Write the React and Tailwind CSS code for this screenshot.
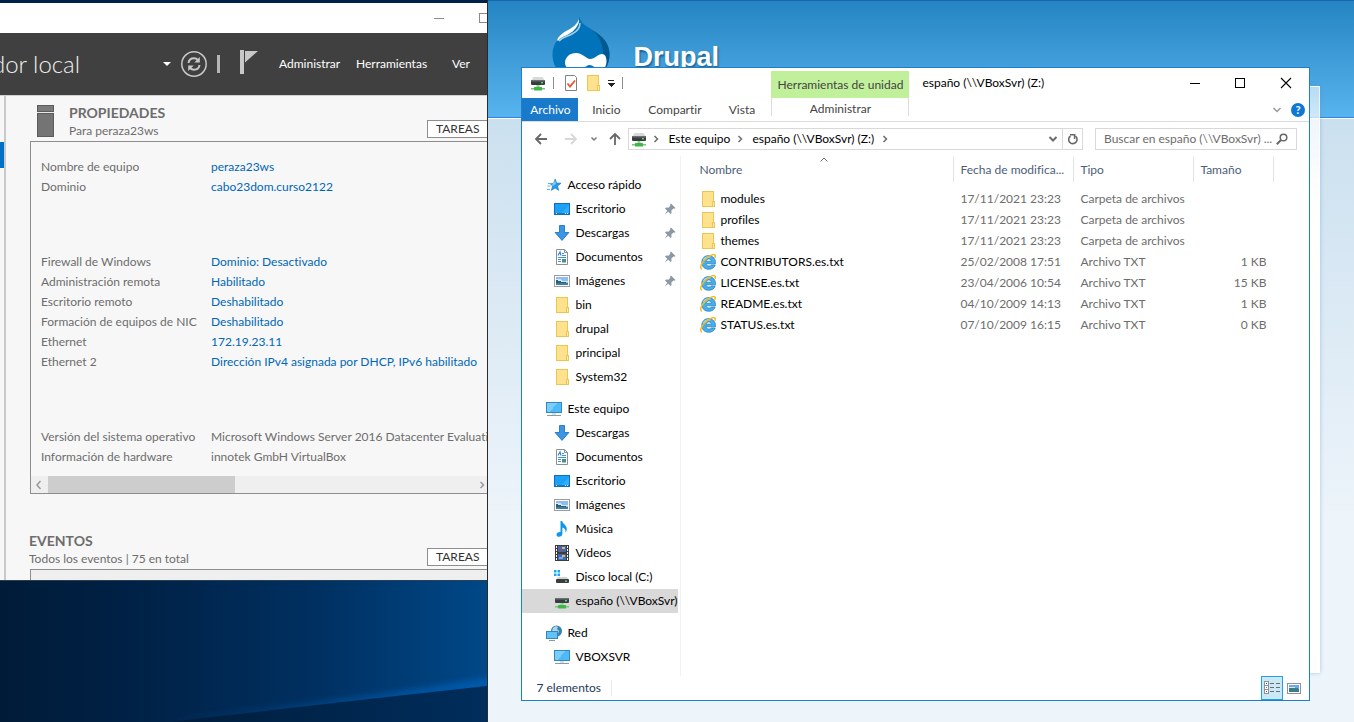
import React from "react";

/* ---------- icons ---------- */

function Svg({ children, size = 16, className = "", crisp = false }) {
  return (
    <svg
      width={size}
      height={size}
      viewBox={`0 0 ${size} ${size}`}
      fill="none"
      aria-hidden="true"
      className={`shrink-0 ${className}`}
      shapeRendering={crisp ? "crispEdges" : "auto"}
    >
      {children}
    </svg>
  );
}

const NetDrive = () => (
  <Svg>
    <path d="M3.500 2h9L15 6H1z" fill="#d6d8d9" />
    <rect x="1" y="5" width="14" height="5" rx="1" fill="#3a3d3f" />
    <rect x="1" y="5" width="14" height="1.400" rx=".7" fill="#6c7072" />
    <rect x="11" y="7" width="2" height="1.400" fill="#4fe06a" />
    <path d="M6.500 10h3v2h-3z" fill="#8fd98b" />
    <rect x="1" y="13" width="14" height="1.500" fill="#7cc47c" />
    <rect x="4" y="12" width="8" height="3.500" rx=".6" fill="#3fb54a" />
  </Svg>
);

const Folder = () => (
  <Svg crisp>
    <rect x="2" y="0" width="12" height="16" fill="#ecc655" />
    <rect x="3" y="1" width="10" height="14" fill="#ffe28e" />
    <rect x="12" y="10" width="3" height="6" fill="#ecc655" />
    <rect x="13" y="11" width="1" height="4" fill="#ffe9a8" />
  </Svg>
);

const Star = () => (
  <Svg>
    <path d="M9.200 2l1.500 4 4.400.2-3.500 2.800 1.200 4.400-3.700-2.300-3.800 2.300 1.300-4.400-2.400-2.300 3.500-.3z" fill="#2b9ae6" stroke="#1776bd" strokeWidth=".6" />
    <path d="M9.200 3.800l.9 2.700-3.300 2.700-.7-1.700z" fill="#7cc8f7" />
    <path d="M2 6.500h3M1.500 9h3M1 12.500h3" stroke="#5cb1ea" />
  </Svg>
);

const Desktop = () => (
  <Svg crisp>
    <rect x="0" y="2" width="16" height="12" fill="#0d6fc1" />
    <rect x="1" y="3" width="14" height="9" fill="#1ba1f5" />
    <path d="M8 12L15 4v8z" fill="#33adf8" />
    <rect x="1" y="12" width="14" height="1" fill="#1478c8" />
    <rect x="2" y="12" width="1" height="1" fill="#fff" />
    <rect x="11" y="12" width="1" height="1" fill="#fff" />
    <rect x="13" y="12" width="1" height="1" fill="#fff" />
  </Svg>
);

const Download = () => (
  <Svg>
    <path d="M5.500 .5h5v7h4.400L8 15.400 1.100 7.500h4.400z" fill="#3b96e4" stroke="#2377c2" strokeWidth=".9" />
  </Svg>
);

const Doc = () => (
  <Svg>
    <path d="M2.500 .5h8l3 3v12h-11z" fill="#fff" stroke="#8b8f92" />
    <path d="M10.500 .5v3h3" stroke="#8b8f92" />
    <path d="M4 6.500l2-3.500 1 3.500" stroke="#2a7fc9" strokeWidth="1.100" />
    <path d="M8 4.500h2M8 6.500h4M4 8.500h8M4 10.500h3M4 12.500h3" stroke="#3f93d3" />
    <rect x="8" y="10" width="4" height="3.500" fill="#4c8d86" />
  </Svg>
);

const Picture = () => (
  <Svg crisp>
    <rect x="0" y="2" width="16" height="12" fill="#9a9da0" />
    <rect x="1" y="3" width="14" height="10" fill="#fff" />
    <rect x="2" y="4" width="12" height="8" fill="#8fbdec" />
    <path d="M2 6h4l2 2h6v1H2z" fill="#d3e6f4" />
    <path d="M2 7l3 1 4 1 5 1v2H2z" fill="#2f5e73" />
    <rect x="2" y="10" width="12" height="2" fill="#3c7fa8" />
  </Svg>
);

const Monitor = () => (
  <Svg crisp>
    <rect x="0" y="1" width="16" height="11" fill="#3187bf" />
    <rect x="1" y="2" width="14" height="9" fill="#4fbaf8" />
    <path d="M1 2h10L4 11H1z" fill="#7bcdfb" />
    <rect x="6" y="12" width="4" height="2" fill="#d7dde1" />
    <rect x="1" y="14" width="14" height="1" fill="#8a9ba8" />
  </Svg>
);

const Music = () => (
  <Svg>
    <path d="M6.500 0h1.700c.3 2.700 4.600 4 4.600 8 0 1.500-.6 2.600-1.400 3.500.6-2.600-.7-4.300-3-5v6.300c0 1.800-1.600 3-3.400 3-1.500 0-2.500-.9-2.500-2.100 0-1.600 1.700-2.800 4-2.600z" fill="#0f97ea" />
  </Svg>
);

const Film = () => (
  <Svg crisp>
    <rect x="1" y="0" width="14" height="16" fill="#3b3d3f" />
    {[1, 4, 7, 10, 13].map((y) => (
      <g key={y} fill="#fff">
        <rect x="2" y={y} width="1" height="2" />
        <rect x="13" y={y} width="1" height="2" />
      </g>
    ))}
    <rect x="4" y="1" width="8" height="6" fill="#3c69bb" />
    <rect x="4" y="9" width="8" height="6" fill="#3c69bb" />
    <rect x="8" y="2" width="3" height="2" fill="#e8b93a" />
    <rect x="5" y="4" width="3" height="2" fill="#b54536" />
    <rect x="8" y="10" width="3" height="2" fill="#e8b93a" />
    <rect x="5" y="12" width="4" height="2" fill="#7aa8dd" />
  </Svg>
);

const LocalDisk = () => (
  <Svg>
    <path d="M0 1h2.500v2.500H0zM3.500 1H6v2.500H3.500zM0 4.500h2.500V7H0zM3.500 4.500H6V7H3.500z" fill="#19a7ef" />
    <path d="M4 8h9l2 3H2z" fill="#d2d5d7" />
    <rect x="2" y="10" width="13" height="4" rx="1" fill="#3a3d3f" />
    <rect x="11" y="11.500" width="2" height="1.300" fill="#62e36f" />
  </Svg>
);

const Network = () => (
  <Svg>
    <circle cx="10.500" cy="6" r="5.500" fill="#3b80aa" />
    <path d="M7 3c2-2 4-2 5-1l-1 2 2 2-1 3-3-2-3-1z" fill="#a9d6ea" />
    <rect x="0" y="6" width="12" height="8" fill="#2f86c1" />
    <rect x="1" y="7" width="10" height="6" fill="#62c2f8" />
    <path d="M3 15.500h6" stroke="#8a9ba8" />
  </Svg>
);

const Pin = () => (
  <Svg size={12} className="ml-auto mr-[2px]">
    <path d="M7 .5l4.500 4.500-1 .8-1.200-.2-2 2.100.3 2.300-1 1L4.300 8.700 .6 11.500l2.700-3.800L1 5.400l1-1 2.300.3 2-2-.2-1.300z" fill="#8c99a4" />
  </Svg>
);

const Explorer = () => (
  <Svg>
    <path
      fillRule="evenodd"
      d="M8.600 1.600c4 0 6.900 2.900 6.900 6.900v1.300H6.100c.2 1.500 1.300 2.300 2.900 2.300 1.100 0 1.900-.4 2.400-1.100h3.800c-.9 2.700-3.300 4.300-6.400 4.300-4.200 0-7-2.700-7-6.800s2.800-6.900 6.800-6.900zM6.100 7.200h5.300c-.2-1.400-1.200-2.300-2.600-2.300S6.400 5.800 6.100 7.200z"
      fill="#46aee8"
      stroke="#2179bd"
      strokeWidth=".7"
    />
    <path d="M3.400 6.200C4.700 3.500 7.500 2.400 10.500 3" stroke="#a5dcf8" strokeWidth="1.200" />
    <path d="M2 15.200C-1 14 1.800 8.200 6.500 4.200 10.500 .8 14.600-.3 15.200 1.500c.2.700 0 1.500-.4 2.400" stroke="#f2bb1d" strokeWidth="1.500" />
  </Svg>
);

function Chevron({ dir, className = "", stroke = "#6d6d6d", width = 1.5 }) {
  const d = {
    down: "M1.500 3l3.500 3.500L8.500 3",
    up: "M1.500 6.500L5 3l3.500 3.500",
    right: "M3.500 2L6.500 5l-3 3",
    left: "M6.500 1L3 5l3.500 4",
  }[dir];
  return (
    <Svg size={10} className={className}>
      <path d={d} stroke={stroke} strokeWidth={width} />
    </Svg>
  );
}

/* ---------- server manager ---------- */

const propertyGroups = [
  [
    ["Nombre de equipo", "peraza23ws", true],
    ["Dominio", "cabo23dom.curso2122", true],
  ],
  [
    ["Firewall de Windows", "Dominio: Desactivado", true],
    ["Administración remota", "Habilitado", true],
    ["Escritorio remoto", "Deshabilitado", true],
    ["Formación de equipos de NIC", "Deshabilitado", true],
    ["Ethernet", "172.19.23.11", true],
    ["Ethernet 2", "Dirección IPv4 asignada por DHCP, IPv6 habilitado", true],
  ],
  [
    ["Versión del sistema operativo", "Microsoft Windows Server 2016 Datacenter Evaluation", false],
    ["Información de hardware", "innotek GmbH VirtualBox", false],
  ],
];

function TasksButton() {
  return (
    <button className="h-[18px] w-[120px] border border-[#8e8e8e] bg-white pl-2 text-left text-xs leading-4 text-[#333]">
      TAREAS
    </button>
  );
}

function ServerManager() {
  return (
    <section className="flex h-[577px] flex-col overflow-hidden whitespace-nowrap bg-[#f7f7f7]">
      <div className="flex h-[30px] shrink-0 items-center bg-white pl-[434px]">
        <button aria-label="Minimizar" className="flex h-[9px] w-[10px] shrink-0 items-center">
          <span className="block h-px w-full bg-[#8c8c8c]" />
        </button>
        <button aria-label="Maximizar" className="ml-[35px] size-[10px] shrink-0 border border-[#8c8c8c]" />
      </div>

      <header className="flex h-[62px] shrink-0 items-center bg-[#404040] text-xs text-white">
        <h1 className="-ml-2 w-[171px] shrink-0 text-2xl font-light text-[#f0f0f0]">dor local</h1>
        <svg width="8" height="4" viewBox="0 0 8 4" className="shrink-0" aria-hidden="true">
          <path d="M0 0h8L4 4z" fill="#fff" />
        </svg>
        <button aria-label="Actualizar" className="ml-[10px] shrink-0">
          <svg width="26" height="26" viewBox="0 0 26 26" fill="none">
            <circle cx="13" cy="13" r="12.200" stroke="#c8c8c8" strokeWidth="1.500" />
            <path d="M7.500 12c.3-3 2.600-4.700 5.500-4.700 1.800 0 3 .7 4 1.700M18.500 14c-.3 3-2.600 4.700-5.500 4.700-1.800 0-3-.7-4-1.700" stroke="#c8c8c8" strokeWidth="2" />
            <path d="M18.800 6v5.500h-5.500zM7.200 20v-5.500h5.500z" fill="#c8c8c8" />
          </svg>
        </button>
        <span className="ml-[10px] h-[18px] w-[3px] shrink-0 bg-[#b5b5b5]" />
        <button aria-label="Notificaciones" className="ml-5 shrink-0">
          <svg width="20" height="28" viewBox="0 0 20 28" className="block">
            <path d="M0 0h4v24H0z" fill="#c8c8c8" />
            <path d="M5 1h13L5 12.500z" fill="#c8c8c8" />
          </svg>
        </button>
        <button className="ml-[19px] w-[77px] shrink-0 text-left">Administrar</button>
        <button className="w-24 shrink-0 text-left">Herramientas</button>
        <button className="shrink-0">Ver</button>
      </header>

      <div className="flex min-h-0 flex-1 border-t border-[#d0d0d0]">
        <div className="w-[6px] shrink-0 border-r-2 border-[#c9c9c9] pt-[46px]">
          <div className="h-[26px] bg-[#0072c6]" />
        </div>
        <div className="min-w-0 flex-1 pl-6 text-xs text-[#6d6d6d]">
          <div className="flex h-[45px] items-start">
            <svg width="17" height="32" viewBox="0 0 17 32" className="ml-[7px] mt-[9px] shrink-0" aria-hidden="true">
              <rect width="17" height="32" fill="#5c5c5c" />
              <rect x="1" y="1" width="15" height="5" fill="#7b7b7b" />
              <rect y="7" width="17" height="1" fill="#e8e8e8" />
              <rect x="1" y="9" width="15" height="22" fill="#747474" />
            </svg>
            <div className="ml-[15px] mt-2 w-[358px] shrink-0">
              <h2 className="text-sm font-bold leading-[18px]">PROPIEDADES</h2>
              <p className="leading-[18px]">Para peraza23ws</p>
            </div>
            <div className="mt-6 shrink-0">
              <TasksButton />
            </div>
          </div>

          <div className="border-y border-l border-[#8e8e8e]">
            <div className="flex flex-col gap-[55px] overflow-hidden pb-[9px] pl-[10px] pt-[15px]">
              {propertyGroups.map((rows, i) => (
                <dl key={i} className="grid grid-cols-[170px_auto] justify-start leading-5">
                  {rows.map(([name, value, link]) => (
                    <React.Fragment key={name}>
                      <dt>{name}</dt>
                      <dd>
                        {link ? (
                          <a href="#propiedad" className="text-[#0067b8]">
                            {value}
                          </a>
                        ) : (
                          value
                        )}
                      </dd>
                    </React.Fragment>
                  ))}
                </dl>
              ))}
            </div>
            <div className="flex h-[17px] items-center bg-[#efefef]">
              <Chevron dir="left" className="mx-[3px]" stroke="#9a9a9a" />
              <div className="ml-px h-full w-[187px] bg-[#cdcdcd]" />
              <Chevron dir="right" className="ml-auto" stroke="#9a9a9a" />
            </div>
          </div>

          <div className="mt-[38px] flex h-[37px] items-start">
            <div className="-ml-px w-[398px] shrink-0">
              <h2 className="text-sm font-bold leading-[18px]">EVENTOS</h2>
              <p className="leading-[18px]">Todos los eventos | 75 en total</p>
            </div>
            <div className="mt-4 shrink-0">
              <TasksButton />
            </div>
          </div>
          <div className="h-20 border-l border-t border-[#8e8e8e] bg-[#efefef]" />
        </div>
      </div>
    </section>
  );
}

function Wallpaper() {
  return (
    <svg
      viewBox="0 0 487 142"
      preserveAspectRatio="none"
      className="absolute inset-0 size-full"
      aria-hidden="true"
    >
      <defs>
        <linearGradient id="sky" x1="0" y1="0" x2="1" y2="0">
          <stop offset="0" stopColor="#001b38" />
          <stop offset=".3" stopColor="#002247" />
          <stop offset=".65" stopColor="#003061" />
          <stop offset="1" stopColor="#004888" />
        </linearGradient>
        <linearGradient id="beam" x1="0" y1="0" x2="1" y2="0">
          <stop offset="0" stopColor="#0059ad" stopOpacity="0" />
          <stop offset="1" stopColor="#005cb0" />
        </linearGradient>
        <linearGradient id="ground" x1="0" y1="0" x2="1" y2="0">
          <stop offset="0" stopColor="#001d3c" />
          <stop offset="1" stopColor="#002d5c" />
        </linearGradient>
        <filter id="soft" x="-10%" y="-50%" width="120%" height="200%">
          <feGaussianBlur stdDeviation="3" />
        </filter>
      </defs>
      <rect width="487" height="142" fill="url(#sky)" />
      <path d="M170 138Q340 122 500 96V108Q360 124 170 144z" fill="url(#beam)" filter="url(#soft)" />
      <path d="M170 142Q340 122 487 106V142z" fill="url(#ground)" />
      <rect width="487" height="1" fill="#2a3f52" />
    </svg>
  );
}

/* ---------- file explorer ---------- */

const navGroups = [
  {
    head: ["Acceso rápido", Star],
    items: [
      ["Escritorio", Desktop, true],
      ["Descargas", Download, true],
      ["Documentos", Doc, true],
      ["Imágenes", Picture, true],
      ["bin", Folder],
      ["drupal", Folder],
      ["principal", Folder],
      ["System32", Folder],
    ],
  },
  {
    head: ["Este equipo", Monitor],
    items: [
      ["Descargas", Download],
      ["Documentos", Doc],
      ["Escritorio", Desktop],
      ["Imágenes", Picture],
      ["Música", Music],
      ["Vídeos", Film],
      ["Disco local (C:)", LocalDisk],
      ["españo (\\\\VBoxSvr)", NetDrive, false, true],
    ],
  },
  { head: ["Red", Network], items: [["VBOXSVR", Monitor]] },
];

const files = [
  ["modules", "17/11/2021 23:23", "Carpeta de archivos", ""],
  ["profiles", "17/11/2021 23:23", "Carpeta de archivos", ""],
  ["themes", "17/11/2021 23:23", "Carpeta de archivos", ""],
  ["CONTRIBUTORS.es.txt", "25/02/2008 17:51", "Archivo TXT", "1 KB"],
  ["LICENSE.es.txt", "23/04/2006 10:54", "Archivo TXT", "15 KB"],
  ["README.es.txt", "04/10/2009 14:13", "Archivo TXT", "1 KB"],
  ["STATUS.es.txt", "07/10/2009 16:15", "Archivo TXT", "0 KB"],
];

function NavPane() {
  return (
    <nav className="flex w-[159px] shrink-0 flex-col gap-2 border-r border-[#f0f0f0] pt-[17px]">
      {navGroups.map(({ head: [title, HeadIcon], items }) => (
        <ul key={title} className="mr-[2px]">
          <li>
            <button className="flex h-6 w-full items-center gap-[5px] pl-6">
              <HeadIcon />
              {title}
            </button>
          </li>
          {items.map(([name, Icon, pinned, selected]) => (
            <li key={name}>
              <button
                className={`flex h-6 w-full items-center gap-[5px] pl-8 ${selected ? "bg-[#d9d9d9]" : ""}`}
              >
                <Icon />
                {name}
                {pinned && <Pin />}
              </button>
            </li>
          ))}
        </ul>
      ))}
    </nav>
  );
}

function FileTable() {
  const th = "h-8 p-0 pt-px text-left align-top font-normal";
  const cell = "flex h-[25px] items-center border-r border-[#e2e2e2]";
  return (
    <div className="min-w-0 flex-1 overflow-hidden">
      <table className="w-full table-fixed border-collapse">
        <colgroup>
          <col className="w-[273px]" />
          <col className="w-[120px]" />
          <col className="w-[120px]" />
          <col className="w-[80px]" />
          <col />
        </colgroup>
        <thead className="text-[#4c607a]">
          <tr>
            <th className={th}>
              <div className={`relative pl-[18px] ${cell}`}>
                Nombre
                <Chevron dir="up" width={1} className="absolute left-[138px] top-[-2px]" />
              </div>
            </th>
            <th className={th}>
              <div className={`pl-[6px] ${cell}`}>Fecha de modifica...</div>
            </th>
            <th className={th}>
              <div className={`pl-[6px] ${cell}`}>Tipo</div>
            </th>
            <th className={th}>
              <div className={`pl-[6px] ${cell}`}>Tamaño</div>
            </th>
            <td />
          </tr>
        </thead>
        <tbody className="text-[#6d6d6d]">
          {files.map(([name, date, type, size]) => (
            <tr key={name} className="h-[21px]">
              <td className="p-0">
                <div className="flex items-center gap-1 pl-[19px] text-black">
                  {size ? <Explorer /> : <Folder />}
                  {name}
                </div>
              </td>
              <td className="p-0 pl-[6px]">{date}</td>
              <td className="p-0 pl-[6px]">{type}</td>
              <td className="p-0 pr-2 text-right">{size}</td>
              <td />
            </tr>
          ))}
        </tbody>
      </table>
    </div>
  );
}

function ExplorerWindow() {
  return (
    <section className="absolute bottom-[21px] left-[33px] right-[44px] top-[67px] flex flex-col whitespace-nowrap border border-[#1b80d0] bg-white text-xs text-black">
      <header className="flex h-[54px] shrink-0 border-b border-[#dadbdc] text-[#444]">
        <div className="w-[249px] shrink-0">
          <div className="flex h-[30px] items-center pl-2">
            <NetDrive />
            <span className="ml-[7px] h-3 w-px bg-[#8c8c8c]" />
            <button aria-label="Propiedades" className="ml-[9px]">
              <Svg>
                <path d="M2.500 .5h9l2 2v13h-11z" fill="#fff" stroke="#7f8385" />
                <path d="M4.500 8.500l2.500 3 5-6" stroke="#e8562a" strokeWidth="1.800" />
              </Svg>
            </button>
            <button aria-label="Nueva carpeta" className="ml-[6px]">
              <Folder />
            </button>
            <button aria-label="Personalizar barra" className="ml-[6px]">
              <svg width="8" height="8" viewBox="0 0 8 8" aria-hidden="true" shapeRendering="crispEdges">
                <path d="M1 1h6v1H1zM0 4h8L4 8z" fill="#222" />
              </svg>
            </button>
            <span className="ml-[7px] h-3 w-px bg-[#8c8c8c]" />
          </div>
          <div className="flex h-[23px]">
            <button className="w-14 bg-[#1979ca] text-white">Archivo</button>
            <button className="w-14">Inicio</button>
            <button className="w-[81px]">Compartir</button>
            <button className="w-[53px]">Vista</button>
          </div>
        </div>
        <div className="w-[138px] shrink-0 pt-[3px] text-center">
          <div className="h-[27px] bg-[#c0f09a] leading-7">Herramientas de unidad</div>
          <button className="h-[18px] w-full border-x border-[#dcdcdc] pt-[3px]">Administrar</button>
        </div>
        <div className="flex flex-1 flex-col">
          <div className="flex h-[30px] items-center pl-[13px] text-black">
            <h2>españo (\\VBoxSvr) (Z:)</h2>
            <div className="ml-auto flex w-[120px]">
              <button aria-label="Minimizar">
                <Svg size={12} crisp>
                  <path d="M1 6h10v1H1z" fill="#000" />
                </Svg>
              </button>
              <button aria-label="Maximizar" className="ml-[33px]">
                <Svg size={12} crisp>
                  <path d="M1.500 1.500h9v9h-9z" stroke="#000" />
                </Svg>
              </button>
              <button aria-label="Cerrar" className="ml-[34px]">
                <Svg size={12}>
                  <path d="M1 1l10 10M11 1L1 11" stroke="#000" strokeWidth="1.100" />
                </Svg>
              </button>
            </div>
          </div>
          <div className="flex h-[23px] items-center justify-end gap-[9px] pr-1">
            <button aria-label="Expandir cinta">
              <Chevron dir="down" stroke="#9a9a9a" />
            </button>
            <button aria-label="Ayuda" className="size-[14px] rounded-full bg-[#0f78d4] text-[11px] font-bold leading-[14px] text-white">
              ?
            </button>
          </div>
        </div>
      </header>

      <div className="flex h-[34px] shrink-0 items-center pl-3 pr-3">
        <button aria-label="Atrás">
          <Svg size={14}>
            <path d="M13 7H2M7 2L2 7l5 5" stroke="#686868" strokeWidth="1.800" />
          </Svg>
        </button>
        <button aria-label="Adelante" className="ml-4">
          <Svg size={14}>
            <path d="M1 7h11M7 2l5 5-5 5" stroke="#d8d8d8" strokeWidth="1.800" />
          </Svg>
        </button>
        <button aria-label="Ubicaciones recientes" className="ml-[11px]">
          <Svg size={10}>
            <path d="M2.500 3.500L5 6l2.500-2.500" stroke="#7a7a7a" strokeWidth="1.500" />
          </Svg>
        </button>
        <button aria-label="Subir" className="ml-[9px]">
          <Svg size={14}>
            <path d="M7 13V2M2 7l5-5 5 5" stroke="#686868" strokeWidth="1.800" />
          </Svg>
        </button>
        <div className="ml-[6px] flex h-[22px] min-w-0 flex-1 items-center border border-[#d9d9d9] pl-[2px]">
          <NetDrive />
          <Chevron dir="right" className="ml-[4px]" />
          <button className="ml-[7px] w-[62px] text-left">Este equipo</button>
          <Chevron dir="right" className="ml-[5px]" />
          <button className="ml-[7px] w-[122px] text-left">españo (\\VBoxSvr) (Z:)</button>
          <Chevron dir="right" className="ml-[6px]" />
          <button aria-label="Ubicaciones anteriores" className="ml-auto mr-1">
            <Chevron dir="down" width={2} />
          </button>
          <button aria-label="Actualizar" className="flex h-full w-5 items-center justify-center border-l border-[#d9d9d9]">
            <Svg size={12}>
              <path d="M3.500 3A4.200 4.200 0 1 0 8.500 3.200" stroke="#686868" strokeWidth="1.600" />
              <path d="M3 1.700h5.500M7.600 1v5" stroke="#686868" strokeWidth="1.500" />
            </Svg>
          </button>
        </div>
        <label className="ml-3 flex h-[22px] w-[202px] shrink-0 items-center border border-[#d9d9d9] pl-2 pr-2">
          <input
            type="text"
            aria-label="Buscar"
            placeholder="Buscar en españo (\\VBoxSvr) ..."
            className="min-w-0 flex-1 bg-transparent outline-none placeholder:text-[#6d6d6d]"
          />
          <Svg size={12}>
            <circle cx="7.500" cy="4.500" r="3.300" stroke="#686868" strokeWidth="1.500" />
            <path d="M5 7L.8 11.200" stroke="#686868" strokeWidth="2" />
          </Svg>
        </label>
      </div>

      <div className="flex min-h-0 flex-1 overflow-hidden">
        <NavPane />
        <FileTable />
      </div>

      <footer className="flex h-6 shrink-0 items-center pl-[14px] text-[#1e395b]">
        <span className="border-r border-[#ececec] pr-[10px]">7 elementos</span>
        <button aria-label="Detalles" className="ml-auto flex h-full w-[22px] items-center justify-center border border-[#26a0da] bg-[#cbe8f6]">
          <Svg crisp>
            <path d="M0 1h5v13H0z" fill="#8f9295" />
            <path d="M1 2h3v3H1zM1 6h3v3H1zM1 10h3v3H1z" fill="#fff" />
            <path d="M2 3h1v1H2z" fill="#444" />
            <path d="M2 7h1v1H2z" fill="#2a8fd8" />
            <path d="M2 11h1v1H2z" fill="#d22" />
            <path d="M6 3h4v1H6zM12 3h4v1h-4zM6 7h4v1H6zM12 7h4v1h-4zM6 11h4v1H6zM12 11h4v1h-4z" fill="#6d6d6d" />
          </Svg>
        </button>
        <button aria-label="Iconos grandes" className="ml-1 mr-2">
          <svg width="14" height="11" viewBox="0 0 14 11" aria-hidden="true" shapeRendering="crispEdges" className="block">
            <path d="M0 0h14v11H0z" fill="#8f9295" />
            <path d="M1 1h12v9H1z" fill="#fff" />
            <path d="M2 2h10v7H2z" fill="#6ea6f2" />
            <path d="M2 5l4-1 6 2v3H2z" fill="#3a7d86" />
            <path d="M2 4l5 0 2 1H2z" fill="#d5e6f5" />
          </svg>
        </button>
      </footer>
    </section>
  );
}

/* ---------- Drupal page ---------- */

function Druplicon() {
  return (
    <svg width="58" height="64" viewBox="0 0 58 64" className="shrink-0" aria-hidden="true">
      <path d="M27.500 0c1.500 7 7 9 13 13 8 5 17 12 17 24.500C57.500 53 45 64 29 64S.5 53 .5 37.500C.5 26 8 19 15 14.500 22 10 26 8 27.500 0z" fill="#0073ba" />
      <path d="M42 14c8 5 15.500 12 15.500 23.500C57.500 53 45 64 29 64c-4 0-8-.5-11-2 18 1 33-8 33-25 0-9-3-16-9-23z" fill="#00598e" />
      <path d="M27 2c.5 5-3 9.500-7 13-5 4-11 4.500-14 9-2-1 1-5 5-8 6-4 13-6 16-14z" fill="#fff" />
      <path d="M28 6c0 5-4 9-8 11-5 3-10 3-13 7" stroke="#a9cfe8" strokeWidth="1.500" fill="none" />
      <path d="M13 46c0-6 5-10 11-10 7 0 10 6 14 6 5 0 8-5 12-5 3 0 4.500 3 4.500 7 0 6-3 9-6 9-4 0-7-5-11-5s-7 6-14 6c-6 0-10.500-4-10.500-8z" fill="#fff" />
    </svg>
  );
}

function DrupalPage() {
  return (
    <section className="relative flex min-w-0 flex-1 flex-col border-l border-[#2b2b2b] bg-[#edf4fa]">
      <header className="flex h-[118px] shrink-0 items-start gap-[23px] overflow-hidden border-b border-t border-b-[#2f86dc] border-t-[#1b66b5] bg-linear-to-b from-[#2385c2] to-[#58b4ee] pl-16 pt-[16px]">
        <Druplicon />
        <h1 className="mt-6 font-['Liberation_Sans',sans-serif] text-[27px] font-bold leading-8 text-white [text-shadow:1px_2px_2px_#1b5f94]">
          Drupal
        </h1>
      </header>
      <div className="h-[400px] border-t border-white bg-linear-to-b from-[#cbe0ef] to-[#edf4fa]" />
      <div className="absolute bottom-[49px] left-12 right-[34px] top-[86px] border border-b-0 border-white/70 bg-linear-to-b from-white/60 to-white to-20% shadow-[0_0_4px_#4a90c870]" />
      <ExplorerWindow />
    </section>
  );
}

export default function App() {
  return (
    <div className="flex min-h-screen overflow-hidden font-['Lato','Open_Sans',sans-serif] [font-variant-ligatures:none]">
      <div className="flex w-[36%] shrink-0 flex-col">
        <div className="h-[3px] shrink-0 bg-[#00224a]" />
        <ServerManager />
        <div className="relative flex-1">
          <Wallpaper />
        </div>
      </div>
      <DrupalPage />
    </div>
  );
}
